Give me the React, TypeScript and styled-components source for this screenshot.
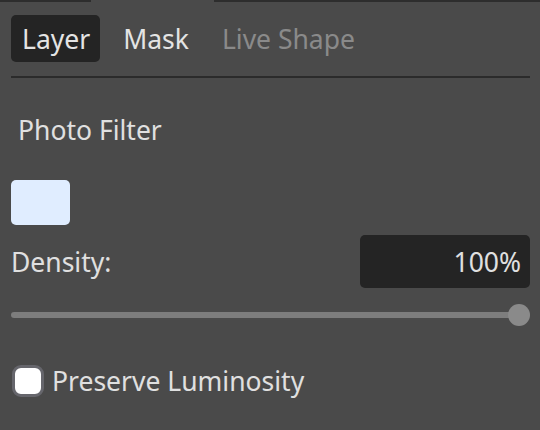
import React from "react";
import styled, { createGlobalStyle } from "styled-components";

const Global = createGlobalStyle`
  html, body { margin: 0; padding: 0; background: #4a4a4a; }
  body { font-family: "Noto Sans", "Open Sans", sans-serif; font-weight: 400; }
`;

const Panel = styled.div`
  width: 540px;
  height: 430px;
  background: #4a4a4a;
  color: #e2e2e2;
  display: flex;
  flex-direction: column;
  overflow: hidden;
  box-sizing: border-box;
`;

const TopEdge = styled.div`
  display: flex;
  height: 2px;
`;

const EdgeSegment = styled.div<{ $w?: number; $gap?: boolean }>`
  ${(p) => (p.$w ? `width: ${p.$w}px;` : "flex: 1;")}
  background: ${(p) => (p.$gap ? "transparent" : "#2d2d2d")};
`;

const Body = styled.div`
  display: flex;
  flex-direction: column;
  padding: 0 10px 0 11px;
`;

const Tabs = styled.div`
  display: flex;
  gap: 12px;
  margin-top: 13px;
`;

const Tab = styled.div<{ $active?: boolean; $disabled?: boolean }>`
  height: 47px;
  padding: 0 10px 0 11px;
  display: flex;
  align-items: center;
  font-size: 26.5px;
  border-radius: 5px;
  background: ${(p) => (p.$active ? "#242424" : "transparent")};
  color: ${(p) => (p.$disabled ? "#8a8a8a" : "#e4e4e4")};
`;

const Divider = styled.div`
  height: 2px;
  background: #2b2b2b;
  margin-top: 14px;
`;

const SectionTitle = styled.div`
  font-size: 26.5px;
  line-height: 36px;
  margin-top: 34px;
  padding-left: 7px;
  color: #e0e0e0;
`;

const Swatch = styled.div`
  width: 59px;
  height: 45px;
  margin-top: 32px;
  border-radius: 5px;
  background: #e0edff;
`;

const Row = styled.div`
  display: flex;
  align-items: center;
  justify-content: space-between;
  margin-top: 10px;
`;

const Label = styled.div`
  font-size: 26.5px;
  color: #e0e0e0;
`;

const ValueBox = styled.div`
  width: 170px;
  height: 53px;
  box-sizing: border-box;
  padding-right: 9px;
  border-radius: 5px;
  background: #242424;
  display: flex;
  align-items: center;
  justify-content: flex-end;
  font-size: 26.5px;
  color: #e0e0e0;
`;

const Slider = styled.div`
  position: relative;
  height: 24px;
  margin-top: 15px;
  display: flex;
  align-items: center;
`;

const Track = styled.div`
  flex: 1;
  height: 6px;
  border-radius: 3px;
  background: #7d7d7d;
  margin-right: 11px;
`;

const Thumb = styled.div`
  position: absolute;
  right: 0;
  top: 1px;
  width: 22px;
  height: 22px;
  border-radius: 50%;
  background: #8a8a8a;
`;

const CheckRow = styled.label`
  display: flex;
  align-items: center;
  gap: 8px;
  margin-top: 36px;
  font-size: 26.5px;
  color: #e0e0e0;
`;

const CheckBox = styled.span`
  width: 32px;
  height: 32px;
  box-sizing: border-box;
  border: 3px solid #66666c;
  border-radius: 9px;
  background: #ffffff;
  margin-left: 1px;
`;

export default function App() {
  return (
    <>
      <Global />
      <Panel>
        <TopEdge>
          <EdgeSegment $w={91} />
          <EdgeSegment $w={123} $gap />
          <EdgeSegment />
        </TopEdge>
        <Body>
          <Tabs>
            <Tab $active>Layer</Tab>
            <Tab>Mask</Tab>
            <Tab $disabled>Live Shape</Tab>
          </Tabs>
          <Divider />
          <SectionTitle>Photo Filter</SectionTitle>
          <Swatch />
          <Row>
            <Label>Density:</Label>
            <ValueBox>100%</ValueBox>
          </Row>
          <Slider>
            <Track />
            <Thumb />
          </Slider>
          <CheckRow>
            <CheckBox />
            Preserve Luminosity
          </CheckRow>
        </Body>
      </Panel>
    </>
  );
}
